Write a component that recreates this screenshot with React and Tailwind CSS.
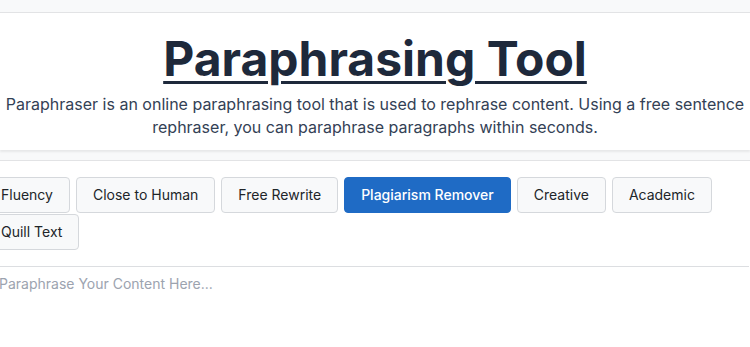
import React, { useState } from "react";

const MODES = [
  "Fluency",
  "Close to Human",
  "Free Rewrite",
  "Plagiarism Remover",
  "Creative",
  "Academic",
  "Quill Text",
];

export default function App() {
  const [mode, setMode] = useState("Plagiarism Remover");
  const [text, setText] = useState("");

  return (
    <div className="h-screen bg-[#f8f9fa] font-['Inter',sans-serif] overflow-hidden">
      <div className="h-3" />
      <header className="bg-white border-t border-[#e2e3e5] shadow-[0_2px_2px_rgba(0,0,0,0.07)] pt-[18px] pb-[11px] text-center">
        <h1 className="text-[48px] leading-[56px] font-bold text-[#1e293b] underline decoration-[3px] underline-offset-[5px]">
          Paraphrasing Tool
        </h1>
        <p className="mt-[6px] text-[16px] leading-[23px] text-[#334155]">
          Paraphraser is an online paraphrasing tool that is used to rephrase content. Using a free sentence rephraser, you can paraphrase paragraphs within seconds.
        </p>
      </header>

      <main className="mt-[10px] bg-white border-t border-[#e2e3e5] h-full">
        <div className="flex flex-wrap gap-x-[6px] gap-y-px -ml-[16px] pt-[16px]">
          {MODES.map((m) => (
            <button
              key={m}
              onClick={() => setMode(m)}
              className={`h-[36px] px-[16px] pb-px rounded-[4px] border text-[14px] ${
                mode === m
                  ? "bg-[#1f6bc5] border-[#1f6bc5] text-white font-medium"
                  : "bg-[#f8f9fa] border-[#d5d8dc] text-[#212529] font-normal"
              }`}
            >
              {m}
            </button>
          ))}
        </div>

        <textarea
          value={text}
          onChange={(e) => setText(e.target.value)}
          placeholder="Paraphrase Your Content Here..."
          className="mt-[16px] block w-full h-[82px] border-t border-[#dcdee1] -ml-[1px] pt-[6px] text-[14px] text-[#212529] placeholder:text-[#9ca3af] resize-none outline-none"
        />
      </main>
    </div>
  );
}
